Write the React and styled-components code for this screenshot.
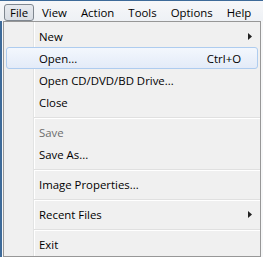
import styled, { createGlobalStyle } from 'styled-components';

const GlobalStyle = createGlobalStyle`
  html, body {
    margin: 0;
    padding: 0;
    background: #f7f8f9;
  }
  body {
    font-family: "Open Sans", "Noto Sans", sans-serif;
    font-size: 11.4px;
    color: #000;
  }
`;

const menus = ['File', 'View', 'Action', 'Tools', 'Options', 'Help'];

const items = [
  { label: 'New', submenu: true },
  { label: 'Open...', shortcut: 'Ctrl+O', hover: true },
  { label: 'Open CD/DVD/BD Drive...' },
  { label: 'Close' },
  { sep: true },
  { label: 'Save', disabled: true },
  { label: 'Save As...' },
  { sep: true },
  { label: 'Image Properties...' },
  { sep: true },
  { label: 'Recent Files', submenu: true },
  { sep: true },
  { label: 'Exit' },
];

export default function App() {
  return (
    <>
      <GlobalStyle />
      <Window>
        <MenuBar>
          {menus.map((m) => (
            <BarItem key={m} $active={m === 'File'}>{m}</BarItem>
          ))}
        </MenuBar>
        <Body>
          <Dropdown>
            {items.map((it, i) =>
              it.sep ? (
                <Separator key={i} />
              ) : (
                <Item key={i} $hover={it.hover} $disabled={it.disabled}>
                  <Label>{it.label}</Label>
                  {it.shortcut && <Shortcut>{it.shortcut}</Shortcut>}
                  {it.submenu && (
                    <Arrow width="4" height="7" viewBox="0 0 4 7">
                      <path d="M0 0 L4 3.5 L0 7 Z" fill="#222" />
                    </Arrow>
                  )}
                </Item>
              )
            )}
          </Dropdown>
        </Body>
      </Window>
    </>
  );
}

const Window = styled.div`
  width: 263px;
  height: 257px;
  display: flex;
  flex-direction: column;
  overflow: hidden;
`;

const MenuBar = styled.div`
  height: 20px;
  display: flex;
  align-items: flex-end;
  padding-left: 3px;
  border-top: 1px solid #3d6a99;
  background: linear-gradient(#f6f7f9, #eef1f5);
  white-space: nowrap;
`;

const BarItem = styled.div`
  height: 17px;
  line-height: 16px;
  padding: 0 5px;
  margin: 0 1px;
  box-sizing: border-box;
  border: 1px solid ${(p) => (p.$active ? '#7f8790' : 'transparent')};
  border-radius: 3px;
  background: ${(p) => (p.$active ? 'linear-gradient(#e6e9ee, #d8dde4)' : 'transparent')};
`;

const Body = styled.div`
  flex: 1;
  display: flex;
  border-left: 2px solid #3d6a99;
`;

const Dropdown = styled.div`
  margin-left: 1px;
  width: 258px;
  box-sizing: border-box;
  border: 1px solid #979797;
  padding: 3px 0 1px 2px;
  background-color: #f0f0f0;
  background-image: linear-gradient(
    to right,
    transparent 29px,
    #e2e3e3 29px,
    #e2e3e3 30px,
    #ffffff 30px,
    #ffffff 31px,
    transparent 31px
  );
`;

const Item = styled.div`
  height: 22px;
  width: 252px;
  box-sizing: border-box;
  display: flex;
  align-items: center;
  padding-left: 32px;
  border: 1px solid ${(p) => (p.$hover ? '#aeccef' : 'transparent')};
  border-radius: 3px;
  background: ${(p) => (p.$hover ? 'linear-gradient(#f3f7fd, #e3ebf8)' : 'transparent')};
  color: ${(p) => (p.$disabled ? '#6d6d6d' : '#000')};
`;

const Label = styled.span`
  flex: 1;
`;

const Shortcut = styled.span`
  margin-right: 16px;
`;

const Arrow = styled.svg`
  margin-right: 5px;
`;

const Separator = styled.div`
  height: 1px;
  margin: 4px 0 2px 28px;
  background: #e0e0e0;
  border-bottom: 1px solid #fff;
`;
